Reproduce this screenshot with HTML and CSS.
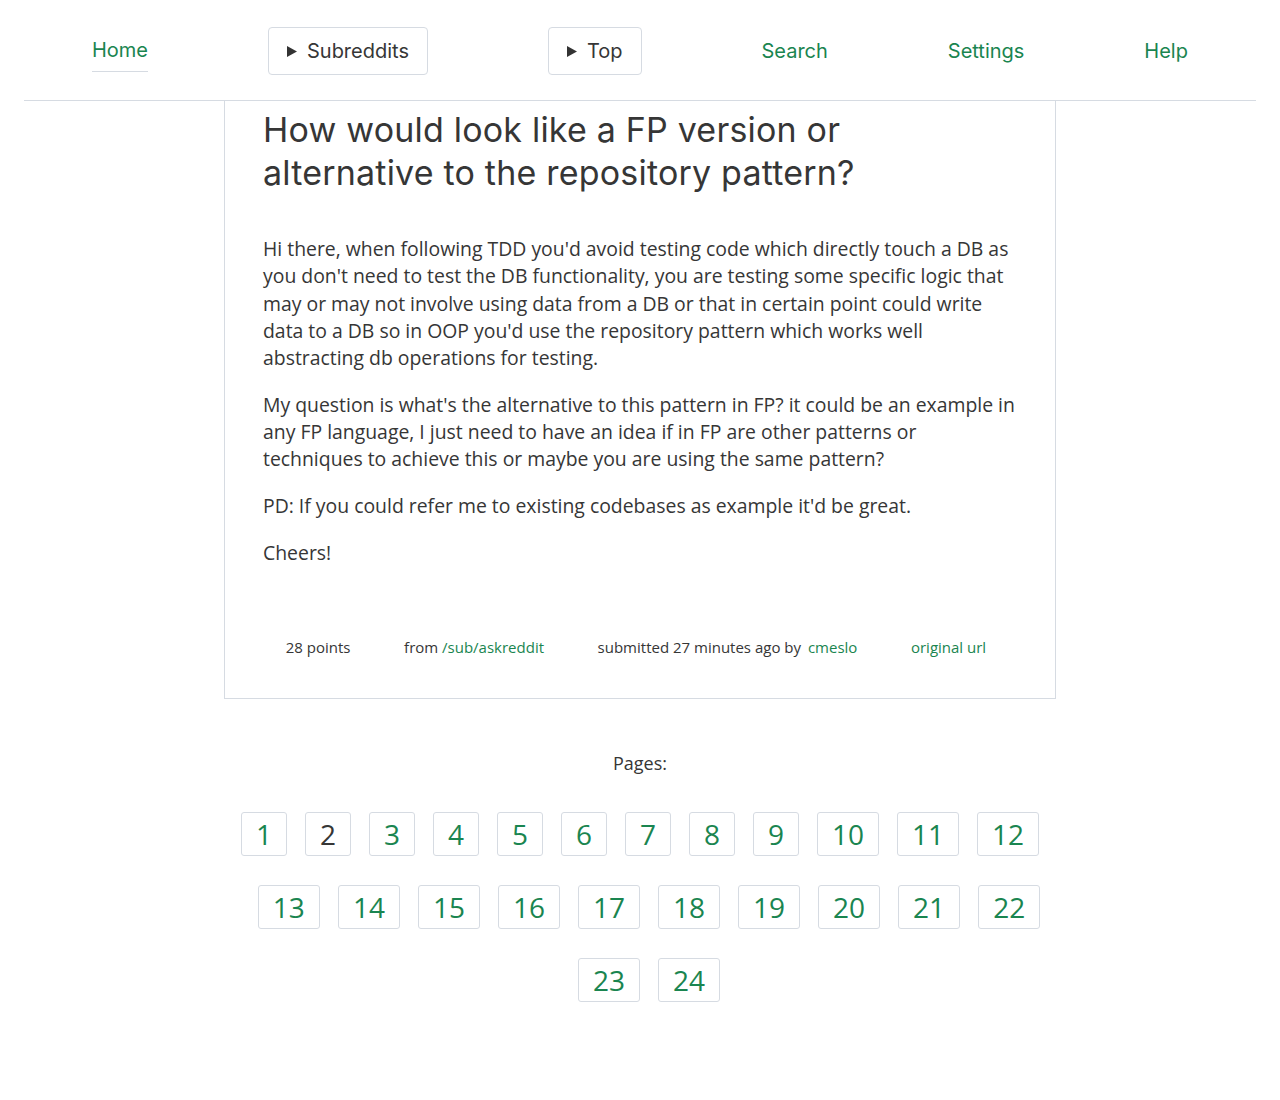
FILE: index.html
```html
<!DOCTYPE html>
<html lang="en">
<head>
<meta charset="utf-8">
<title>How would look like a FP version or alternative to the repository pattern?</title>
<link rel="stylesheet" href="styles.css">
</head>
<body>
<header class="site-header">
  <nav class="nav">
    <a class="nav-link nav-home" href="#">Home</a>
    <button class="nav-btn" type="button"><svg class="tri" width="10" height="11" viewBox="0 0 10 11"><polygon points="0,0 10,5.5 0,11" fill="#333"/></svg><span>Subreddits</span></button>
    <button class="nav-btn" type="button"><svg class="tri" width="10" height="11" viewBox="0 0 10 11"><polygon points="0,0 10,5.5 0,11" fill="#333"/></svg><span>Top</span></button>
    <a class="nav-link" href="#">Search</a>
    <a class="nav-link" href="#">Settings</a>
    <a class="nav-link" href="#">Help</a>
  </nav>
</header>

<main>
  <article class="post">
    <h1 class="post-title">How would look like a FP version or alternative to the repository pattern?</h1>
    <div class="post-body">
      <p>Hi there, when following TDD you'd avoid testing code which directly touch a DB as you don't need to test the DB functionality, you are testing some specific logic that may or may not involve using data from a DB or that in certain point could write data to a DB so in OOP you'd use the repository pattern which works well abstracting db operations for testing.</p>
      <p>My question is what's the alternative to this pattern in FP? it could be an example in any FP language, I just need to have an idea if in FP are other patterns or techniques to achieve this or maybe you are using the same pattern?</p>
      <p>PD: If you could refer me to existing codebases as example it'd be great.</p>
      <p>Cheers!</p>
    </div>
    <div class="post-meta">
      <span>28 points</span>
      <span>from <a href="#">/sub/askreddit</a></span>
      <span>submitted 27 minutes ago by <a class="author" href="#">cmeslo</a></span>
      <span><a href="#">original url</a></span>
    </div>
  </article>

  <section class="pages">
    <div class="pages-label">Pages:</div>
    <div class="pages-list">
      <a class="page" href="#">1</a>
      <a class="page current" href="#">2</a>
      <a class="page" href="#">3</a>
      <a class="page" href="#">4</a>
      <a class="page" href="#">5</a>
      <a class="page" href="#">6</a>
      <a class="page" href="#">7</a>
      <a class="page" href="#">8</a>
      <a class="page" href="#">9</a>
      <a class="page" href="#">10</a>
      <a class="page" href="#">11</a>
      <a class="page" href="#">12</a>
      <a class="page" href="#">13</a>
      <a class="page" href="#">14</a>
      <a class="page" href="#">15</a>
      <a class="page" href="#">16</a>
      <a class="page" href="#">17</a>
      <a class="page" href="#">18</a>
      <a class="page" href="#">19</a>
      <a class="page" href="#">20</a>
      <a class="page" href="#">21</a>
      <a class="page" href="#">22</a>
      <a class="page" href="#">23</a>
      <a class="page" href="#">24</a>
    </div>
  </section>
</main>
</body>
</html>
```

FILE: styles.css
```css
* { box-sizing: border-box; }

body {
  margin: 0;
  background: #fff;
  color: #363636;
  font-family: "Open Sans", "Noto Sans", sans-serif;
}

a { color: #1a8550; text-decoration: none; }

.site-header {
  margin: 0 24px;
  border-bottom: 1px solid #d6dbe2;
}

.nav {
  height: 100px;
  padding: 2px 8px 0;
  display: flex;
  justify-content: space-around;
  align-items: center;
  font-family: "Inter", "Noto Sans", sans-serif;
  font-size: 20px;
}

.nav-link {
  color: #1a8550;
  line-height: 28px;
}

.nav-home {
  padding: 6px 0 7px;
  border-bottom: 1px solid #d6dbe2;
}

.nav-btn {
  height: 48px;
  padding: 0 18px;
  display: flex;
  align-items: center;
  gap: 10px;
  background: #fff;
  border: 1px solid #d6dbe2;
  border-radius: 4px;
  font: inherit;
  color: #363636;
}

.tri { display: block; }

.post {
  width: 832px;
  margin: 0 auto;
  padding: 7px 38px 40px;
  border: 1px solid #d6dbe2;
  border-top: none;
}

.post-title {
  margin: 0;
  padding-right: 24px;
  font-family: "Inter", "Noto Sans", sans-serif;
  font-weight: 400;
  font-size: 34px;
  letter-spacing: 0.2px;
  line-height: 43px;
  color: #363636;
}

.post-body {
  margin-top: 41px;
  font-size: 19.4px;
  line-height: 27.25px;
}

.post-body p { margin: 0 0 19.5px; }
.post-body p:last-child { margin-bottom: 0; }

.post-meta {
  margin: 70px 4px 0 -4px;
  display: flex;
  justify-content: space-around;
  font-size: 15px;
  line-height: 22px;
}

.post-meta .author { margin-left: 3px; }

.pages {
  width: 832px;
  margin: 51px auto 60px;
}

.pages-label {
  text-align: center;
  font-size: 18px;
  line-height: 27px;
}

.pages-list {
  margin-top: 35px;
  display: flex;
  flex-wrap: wrap;
  justify-content: center;
  row-gap: 29px;
}

.page {
  height: 44px;
  padding: 0 14px;
  border: 1px solid #d6dbe2;
  border-radius: 3px;
  font-size: 28px;
  line-height: 42px;
  color: #1a8550;
}

.page + .page { margin-left: 18px; }

.page.current { color: #363636; }
```
